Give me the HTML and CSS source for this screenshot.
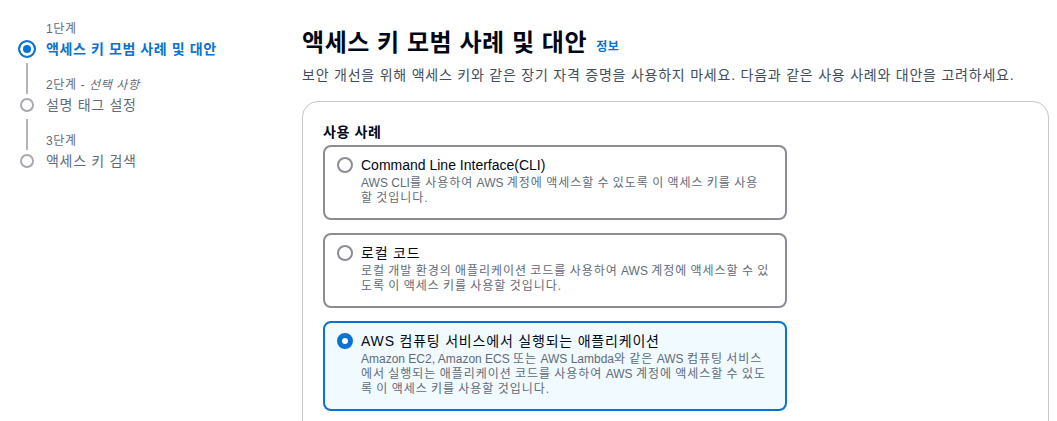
FILE: index.html
```html
<!DOCTYPE html>
<html lang="ko">
<head>
  <meta charset="UTF-8">
  <meta name="viewport" content="width=device-width, initial-scale=1.0">
  <title>액세스 키 만들기</title>
  <link rel="stylesheet" href="styles.css">
</head>
<body>
  <div class="layout">
    <nav class="steps">
      <div class="step">
        <div class="rail">
          <div class="rail-space"></div>
          <div class="dot-box"><span class="dot dot-active"></span></div>
        </div>
        <div class="step-text">
          <div class="step-label">1단계</div>
          <div class="step-title active">액세스 키 모범 사례 및 대안</div>
        </div>
      </div>
      <div class="step">
        <div class="rail">
          <div class="rail-line"></div>
          <div class="dot-box"><span class="dot"></span></div>
        </div>
        <div class="step-text">
          <div class="step-label">2단계 - <em>선택 사항</em></div>
          <div class="step-title">설명 태그 설정</div>
        </div>
      </div>
      <div class="step">
        <div class="rail">
          <div class="rail-line"></div>
          <div class="dot-box"><span class="dot"></span></div>
        </div>
        <div class="step-text">
          <div class="step-label">3단계</div>
          <div class="step-title">액세스 키 검색</div>
        </div>
      </div>
    </nav>

    <main class="content">
      <h1 class="page-title">액세스 키 모범 사례 및 대안 <a class="info-link" href="#">정보</a></h1>
      <p class="page-desc">보안 개선을 위해 액세스 키와 같은 장기 자격 증명을 사용하지 마세요. 다음과 같은 사용 사례와 대안을 고려하세요.</p>

      <section class="panel">
        <div class="panel-label">사용 사례</div>
        <div class="tiles">
          <label class="tile">
            <span class="radio"></span>
            <span class="tile-body">
              <span class="tile-title latin">Command Line Interface(CLI)</span>
              <span class="tile-desc"><span class="en">AWS CLI</span>를 사용하여 <span class="en">AWS</span> 계정에 액세스할 수 있도록 이 액세스 키를 사용할 것입니다.</span>
            </span>
          </label>
          <label class="tile">
            <span class="radio"></span>
            <span class="tile-body">
              <span class="tile-title">로컬 코드</span>
              <span class="tile-desc">로컬 개발 환경의 애플리케이션 코드를 사용하여 <span class="en">AWS</span> 계정에 액세스할 수 있도록 이 액세스 키를 사용할 것입니다.</span>
            </span>
          </label>
          <label class="tile selected">
            <span class="radio checked"></span>
            <span class="tile-body">
              <span class="tile-title">AWS 컴퓨팅 서비스에서 실행되는 애플리케이션</span>
              <span class="tile-desc"><span class="en">Amazon EC2, Amazon ECS</span> 또는 <span class="en">AWS Lambda</span>와 같은 <span class="en">AWS</span> 컴퓨팅 서비스에서 실행되는 애플리케이션 코드를 사용하여 <span class="en">AWS</span> 계정에 액세스할 수 있도록 이 액세스 키를 사용할 것입니다.</span>
            </span>
          </label>
        </div>
      </section>
    </main>
  </div>
</body>
</html>
```

FILE: styles.css
```css
body {
  margin: 0;
  font-family: "Liberation Sans", "Noto Sans CJK KR", sans-serif;
  color: #000716;
  background: #fff;
}
.layout {
  display: flex;
}

/* wizard steps */
.steps {
  width: 302px;
  flex-shrink: 0;
  padding: 21px 0 0 18px;
  box-sizing: border-box;
}
.step {
  display: grid;
  grid-template-columns: 18px 1fr;
  column-gap: 10px;
}
.step + .step .step-text {
  padding-top: 18px;
}
.rail {
  display: flex;
  flex-direction: column;
  align-items: center;
}
.rail-space {
  flex: 1;
}
.rail-line {
  flex: 1;
  width: 2px;
  margin: 4px 0 1px;
  background: #b4b4bb;
}
.dot-box {
  height: 20px;
  display: flex;
  align-items: center;
  justify-content: center;
}
.dot {
  width: 14px;
  height: 14px;
  box-sizing: border-box;
  border: 2px solid #a8a8b0;
  border-radius: 50%;
  background: #fff;
}
.dot-active {
  width: 18px;
  height: 18px;
  border-color: #0972d3;
  background: #0972d3;
  box-shadow: inset 0 0 0 3px #fff;
}
.step-label {
  font-size: 12px;
  line-height: 16px;
  color: #5f6b7a;
  margin-bottom: 2px;
  letter-spacing: 0.6px;
}
.step-label em {
  font-style: italic;
}
.step-title {
  font-size: 14px;
  line-height: 20px;
  color: #5f6b7a;
  letter-spacing: 0.7px;
}
.step-title.active {
  color: #0972d3;
  font-weight: bold;
  letter-spacing: 0.6px;
}

/* main content */
.content {
  flex: 1;
  padding: 28px 8px 0 0;
}
.page-title {
  margin: 0;
  font-size: 24px;
  line-height: 30px;
  font-weight: bold;
  color: #000716;
  letter-spacing: 0.55px;
}
.info-link {
  margin-left: 2px;
  font-size: 12px;
  font-weight: bold;
  color: #0972d3;
  text-decoration: none;
  letter-spacing: 0.5px;
}
.page-desc {
  margin: 3px 0 0;
  font-size: 14px;
  line-height: 20px;
  color: #414d5c;
  letter-spacing: 0.78px;
}
.panel {
  margin-top: 16px;
  border: 1px solid #c6c6cd;
  border-radius: 16px;
  padding: 20px 20px 40px;
  min-height: 400px;
}
.panel-label {
  font-size: 14px;
  line-height: 20px;
  font-weight: bold;
  margin-bottom: 3px;
  letter-spacing: 0.6px;
}
.tiles {
  display: flex;
  flex-direction: column;
  gap: 13px;
  width: 464px;
}
.tile {
  display: flex;
  align-items: flex-start;
  padding: 8px 15px 12px 12px;
  border: 2px solid #8c8c94;
  border-radius: 8px;
  cursor: pointer;
}
.tile.selected {
  border-color: #0972d3;
  background: #f1faff;
}
.radio {
  flex-shrink: 0;
  width: 16px;
  height: 16px;
  margin: 2px 8px 0 0;
  box-sizing: border-box;
  border: 2px solid #8c8c94;
  border-radius: 50%;
  background: #fff;
}
.radio.checked {
  border: 5px solid #0972d3;
}
.tile-body {
  flex: 1;
  display: flex;
  flex-direction: column;
}
.tile-title {
  font-size: 14px;
  line-height: 20px;
  color: #000716;
  letter-spacing: 0.8px;
}
.tile-title.latin {
  letter-spacing: 0;
}
.tile-desc {
  margin-top: 1px;
  font-size: 12px;
  line-height: 15px;
  color: #5f6b7a;
  letter-spacing: 0.08em;
  word-spacing: -0.08em;
}
.tile-desc .en {
  letter-spacing: 0;
  word-spacing: 0;
}
```
